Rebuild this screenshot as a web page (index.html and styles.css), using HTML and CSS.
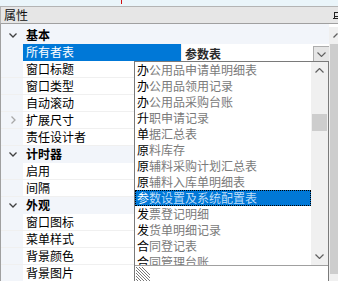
FILE: index.html
```html
<!DOCTYPE html>
<html lang="zh-CN">
<head>
<meta charset="utf-8">
<link rel="stylesheet" href="styles.css">
</head>
<body>
<div class="top"><span class="redline"></span></div>
<div class="titlebar">
  <span class="title">属性</span>
  <svg class="pin" width="5" height="9" viewBox="0 0 5 9"><path d="M1.5 0V7M1.5 0.5H5M1.5 4.5H5M0 6.5H5" stroke="#222" stroke-width="1" fill="none"/></svg>
</div>
<div class="main">
  <div class="grid">
    <div class="row cat">
      <span class="gut"><svg width="8" height="5" viewBox="0 0 8 5"><path d="M0.5 0.5L4 4L7.5 0.5" stroke="#404040" stroke-width="1.3" fill="none"/></svg></span>
      <span class="cname">基本</span>
    </div>
    <div class="row sel">
      <span class="gut"></span>
      <span class="name">所有者表</span>
      <span class="val"><b class="vtext">参数表</b><span class="combo"><svg width="9" height="5" viewBox="0 0 9 5"><path d="M0.5 0.5L4.5 4.5L8.5 0.5" stroke="#606060" stroke-width="1.1" fill="none"/></svg></span></span>
    </div>
    <div class="row"><span class="gut"></span><span class="name">窗口标题</span><span class="val"></span></div>
    <div class="row"><span class="gut"></span><span class="name">窗口类型</span><span class="val"></span></div>
    <div class="row"><span class="gut"></span><span class="name">自动滚动</span><span class="val"></span></div>
    <div class="row"><span class="gut"><svg width="5" height="8" viewBox="0 0 5 8"><path d="M0.5 0.5L4 4L0.5 7.5" stroke="#a8a8a8" stroke-width="1.3" fill="none"/></svg></span><span class="name">扩展尺寸</span><span class="val"></span></div>
    <div class="row"><span class="gut"></span><span class="name">责任设计者</span><span class="val"></span></div>
    <div class="row cat">
      <span class="gut"><svg width="8" height="5" viewBox="0 0 8 5"><path d="M0.5 0.5L4 4L7.5 0.5" stroke="#404040" stroke-width="1.3" fill="none"/></svg></span>
      <span class="cname">计时器</span>
    </div>
    <div class="row"><span class="gut"></span><span class="name">启用</span><span class="val"></span></div>
    <div class="row"><span class="gut"></span><span class="name">间隔</span><span class="val"></span></div>
    <div class="row cat">
      <span class="gut"><svg width="8" height="5" viewBox="0 0 8 5"><path d="M0.5 0.5L4 4L7.5 0.5" stroke="#404040" stroke-width="1.3" fill="none"/></svg></span>
      <span class="cname">外观</span>
    </div>
    <div class="row"><span class="gut"></span><span class="name">窗口图标</span><span class="val"></span></div>
    <div class="row"><span class="gut"></span><span class="name">菜单样式</span><span class="val"></span></div>
    <div class="row"><span class="gut"></span><span class="name">背景颜色</span><span class="val"></span></div>
    <div class="row"><span class="gut"></span><span class="name">背景图片</span><span class="val"></span></div>
  </div>
  <div class="vscroll">
    <div class="sbtn"><svg width="5" height="5" viewBox="0 0 5 5"><path d="M0.5 4.5L4.5 0.5" stroke="#606060" stroke-width="1.2" fill="none"/></svg></div>
    <div class="sthumb"></div>
  </div>
</div>

<div class="dropdown">
  <div class="list">
    <div class="items">
      <div class="item"><span class="lead">办</span>公用品申请单明细表</div>
      <div class="item"><span class="lead">办</span>公用品领用记录</div>
      <div class="item"><span class="lead">办</span>公用品采购台账</div>
      <div class="item"><span class="lead">升</span>职申请记录</div>
      <div class="item"><span class="lead">单</span>据汇总表</div>
      <div class="item"><span class="lead">原</span>料库存</div>
      <div class="item"><span class="lead">原</span>辅料采购计划汇总表</div>
      <div class="item"><span class="lead">原</span>辅料入库单明细表</div>
      <div class="item on"><span class="lead">参</span>数设置及系统配置表</div>
      <div class="item"><span class="lead">发</span>票登记明细</div>
      <div class="item"><span class="lead">发</span>货单明细记录</div>
      <div class="item"><span class="lead">合</span>同登记表</div>
      <div class="item"><span class="lead">合</span>同管理台账</div>
    </div>
    <div class="lscroll">
      <div class="lbtn"><svg width="9" height="5" viewBox="0 0 9 5"><path d="M0.5 4.5L4.5 0.5L8.5 4.5" stroke="#606060" stroke-width="1.2" fill="none"/></svg></div>
      <div class="ltrack"><div class="lthumb"></div></div>
      <div class="lbtn"><svg width="9" height="5" viewBox="0 0 9 5"><path d="M0.5 0.5L4.5 4.5L8.5 0.5" stroke="#606060" stroke-width="1.2" fill="none"/></svg></div>
    </div>
  </div>
  <div class="grip">
    <svg width="14" height="15" viewBox="0 0 14 15"><path d="M0 1L14 15M0 4L11 15M0 7L8 15M0 10L5 15M0 13L2 15M3 1L14 12M6 1L14 9" stroke="#777" stroke-width="1" fill="none"/></svg>
  </div>
</div>
</body>
</html>
```
FILE: styles.css
```css
html, body {
  margin: 0;
  padding: 0;
}
body {
  width: 338px;
  height: 281px;
  overflow: hidden;
  background: #ffffff;
  font-family: "Noto Sans CJK SC", "Noto Sans", sans-serif;
  font-size: 12px;
  color: #000;
  position: relative;
}
.top {
  height: 6px;
  background: #eaf5fa;
}
.redline {
  display: block;
  margin-left: 121px;
  width: 1px;
  height: 4px;
  background: #d01010;
}
.titlebar {
  height: 16px;
  border-top: 1px solid #b4b4b4;
  border-bottom: 1px solid #a0a0a0;
  border-left: 1px solid #b4b4b4;
  background: #e6e6e6;
  display: flex;
  align-items: center;
  justify-content: space-between;
  padding-left: 3px;
  line-height: 16px;
}
.title {
  color: #111;
}
.pin {
  margin-top: 2px;
}
.main {
  display: flex;
  height: 257px;
  overflow: hidden;
}
.grid {
  width: 328px;
  border-left: 1px solid #a0a0a0;
  padding-top: 3px;
  background: #f2f5fa;
  flex: none;
  overflow: hidden;
}
.row {
  display: grid;
  grid-template-columns: 22px 158px 1fr;
  height: 16px;
  border-bottom: 1px solid #f0f0f0;
  line-height: 16px;
}
.gut {
  display: flex;
  align-items: center;
  justify-content: center;
  padding-left: 2px;
  background: #f2f5fa;
}
.name {
  background: #fff;
  padding-left: 3px;
  white-space: nowrap;
  overflow: hidden;
}
.val {
  background: #fff;
  border-left: 1px solid #f0f0f0;
  display: flex;
  align-items: center;
  justify-content: space-between;
}
.cat {
  background: #f2f5fa;
  border-bottom-color: #f2f5fa;
}
.cname {
  grid-column: 2 / 4;
  font-weight: bold;
  padding-left: 3px;
}
.sel .name {
  background: #0078d7;
  color: #fff;
}
.vtext {
  padding-left: 3px;
  color: #2a2a2a;
}
.combo {
  width: 15px;
  height: 15px;
  border: 1px solid #adadad;
  background: #e5e5e5;
  display: flex;
  align-items: center;
  justify-content: center;
  margin-top: 2px;
  margin-right: -1px;
}
.vscroll {
  flex: none;
  width: 17px;
  background: #f0f0f0;
  margin-top: 3px;
}
.sbtn {
  height: 17px;
  display: flex;
  align-items: center;
  padding-left: 4px;
}
.sthumb {
  margin-left: 1px;
  width: 15px;
  height: 230px;
  background: #cdcdcd;
}
.dropdown {
  position: absolute;
  left: 134px;
  top: 61px;
  width: 193px;
  height: 219px;
  border: 1px solid #7a7a7a;
  border-bottom: none;
  background: #fff;
  overflow: hidden;
}
.list {
  display: flex;
  height: 203px;
  border-bottom: 1px solid #a0a0a0;
  overflow: hidden;
}
.items {
  width: 176px;
  flex: none;
}
.item {
  height: 16px;
  line-height: 16px;
  padding-left: 2px;
  white-space: nowrap;
  overflow: hidden;
  color: #7a7a7a;
}
.lead {
  color: #000;
}
.item.on {
  background: #0078d7;
  color: #bcdcf7;
  outline: 1px dotted #000;
  outline-offset: -1px;
}
.item.on .lead {
  color: #fff;
}
.lscroll {
  width: 17px;
  background: #f0f0f0;
  display: flex;
  flex-direction: column;
}
.lbtn {
  height: 17px;
  display: flex;
  align-items: center;
  justify-content: center;
  flex: none;
}
.ltrack {
  flex: 1;
}
.lthumb {
  margin-top: 35px;
  margin-left: 1px;
  width: 15px;
  height: 17px;
  background: #cdcdcd;
}
.grip {
  padding-left: 1px;
}
.grip svg {
  display: block;
}
```
